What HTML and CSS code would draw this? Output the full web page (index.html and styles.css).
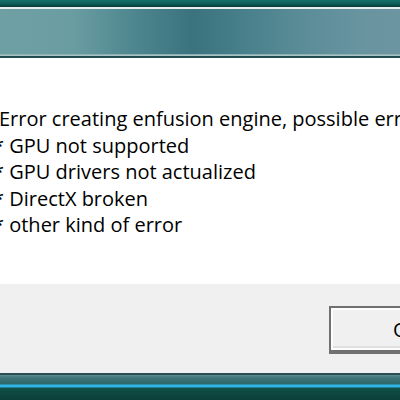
FILE: index.html
```html
<!DOCTYPE html>
<html>
<head>
<meta charset="utf-8">
<link rel="stylesheet" href="styles.css">
</head>
<body>
<div class="window">
  <div class="frame-top"></div>
  <div class="titlebar"></div>
  <div class="content">
    <p class="line">Error creating enfusion engine, possible errors:</p>
    <p class="line bullet"><span class="mark">*</span> GPU not supported</p>
    <p class="line bullet"><span class="mark">*</span> GPU drivers not actualized</p>
    <p class="line bullet"><span class="mark">*</span> DirectX broken</p>
    <p class="line bullet"><span class="mark">*</span> other kind of error</p>
  </div>
  <div class="footer">
    <button class="btn">OK</button>
  </div>
  <div class="frame-bottom"></div>
</div>
</body>
</html>
```

FILE: styles.css
```css
html, body {
  margin: 0;
  padding: 0;
  width: 400px;
  height: 400px;
  overflow: hidden;
  background: #0e4a44;
}
.window {
  width: 400px;
  height: 400px;
  display: flex;
  flex-direction: column;
  overflow: hidden;
}
.frame-top {
  height: 7px;
  background: linear-gradient(to bottom, #17716c 0%, #0d5a55 60%, #073a37 100%);
}
.titlebar {
  height: 46px;
  border-top: 2px solid #e8eeee;
  border-bottom: 1px solid #a9c2c4;
  box-shadow: inset 0 -1px 0 #8fb0b3;
  background: linear-gradient(to right, #6e9fa3 0%, #6a9da2 18%, #4f8790 33%, #3a737e 48%, #447d88 58%, #5a8c97 75%, #6894a0 90%, #6c95a0 100%);
}
.titlebar + .content {
  border-top: 2px solid #1f4d50;
}
.content {
  background: #ffffff;
  height: 228px;
  box-sizing: border-box;
  padding-top: 48px;
  font-family: "Open Sans", "Noto Sans", sans-serif;
  font-size: 20px;
  color: #000;
}
.line {
  margin: 0;
  margin-left: -1px;
  height: 26.5px;
  line-height: 26.5px;
  white-space: nowrap;
}
.bullet {
  margin-left: -7px;
}
.mark {
  font-size: 20px;
}
.footer {
  background: #f0f0f0;
  height: 89px;
  display: flex;
  justify-content: flex-start;
  align-items: flex-start;
  padding-top: 22px;
  padding-left: 329px;
  box-sizing: border-box;
}
.btn {
  flex: none;
  margin: 0;
  width: 156px;
  height: 48px;
  border: 2px solid #707070;
  border-bottom-width: 4px;
  box-shadow: inset 0 0 0 2px #fcfcfc, inset 0 -2px 0 2px #e0e0e0;
  background: #f0f0f0;
  font-family: "Open Sans", sans-serif;
  font-size: 20px;
  color: #000;
  padding: 0;
  box-sizing: border-box;
}
.frame-bottom {
  flex: 1;
  border-top: 2px solid #2a4f52;
  background:
    linear-gradient(to bottom, #5d8c90 0px, #3e7579 3px, #2f666b 9px, #2fb6e6 10px, #2fb6e6 12px, #0f4f47 13px, #0c3f39 100%);
}
```
